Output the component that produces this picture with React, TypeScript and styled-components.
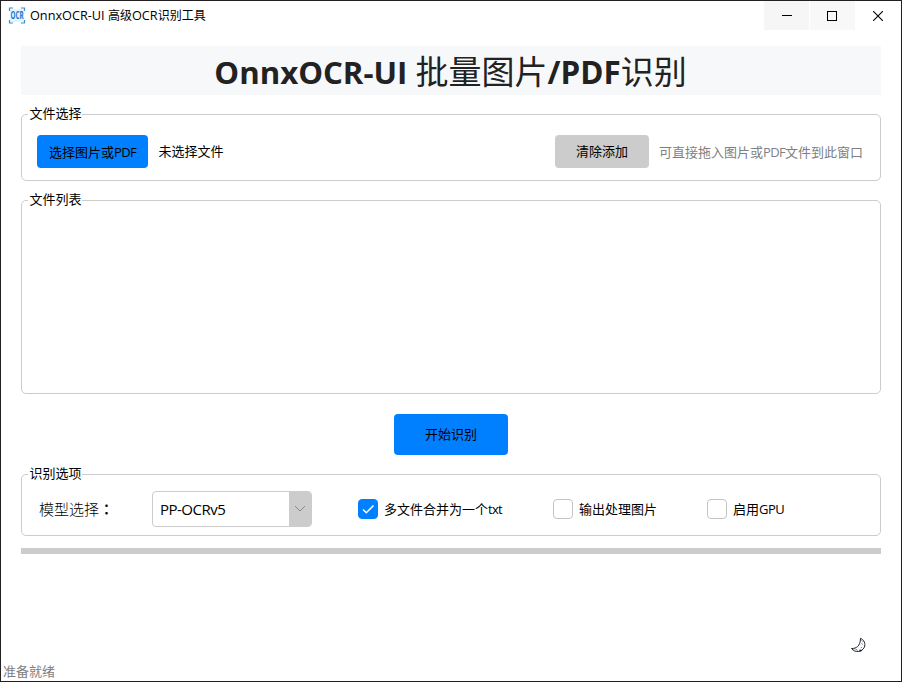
import React from "react";
import styled, { createGlobalStyle } from "styled-components";

const GlobalStyle = createGlobalStyle`
  * { box-sizing: border-box; }
  body { margin: 0; background: #fff; }
`;

const Window = styled.div`
  width: 902px;
  height: 682px;
  display: flex;
  flex-direction: column;
  border: 1px solid #242021;
  background: #fff;
  color: #000;
  font: 13px/17px "Noto Sans CJK SC", sans-serif;
  white-space: nowrap;
  overflow: hidden;
`;

const Latin = styled.span<{ $size?: number; $track?: number }>`
  font-family: "Open Sans", sans-serif;
  font-size: ${(p) => (p.$size ? `${p.$size}px` : "inherit")};
  letter-spacing: ${(p) => p.$track ?? 0}px;
`;

const TitleBar = styled.header`
  display: flex;
  height: 29px;
  flex: none;
`;

const AppTitle = styled.div`
  display: flex;
  align-items: center;
  gap: 5px;
  flex: 1;
  padding-left: 8px;
  font-size: 12px;
`;

const AppName = styled.span`
  padding-bottom: 2px;
`;

const WindowControls = styled.div`
  display: flex;
  gap: 1px;
`;

const ControlButton = styled.button<{ $bg: string }>`
  display: flex;
  align-items: center;
  justify-content: center;
  width: 45px;
  height: 29px;
  padding: 0 1px 0 0;
  border: 0;
  background: ${(p) => p.$bg};
  &:first-child { padding: 0 0 0 1px; }
`;

const Main = styled.main`
  display: flex;
  flex-direction: column;
  flex: 1;
  padding: 16px 20px 0;
`;

const Heading = styled.h1`
  margin: 0 0 11px;
  height: 49px;
  padding-right: 1px;
  background: #f7f8fa;
  color: #222;
  font-size: 33px;
  font-weight: 400;
  line-height: 48px;
  text-align: center;
  ${Latin} { font-weight: 700; }
`;

const Group = styled.fieldset<{ $height: number; $gap: number }>`
  margin: 0 0 ${(p) => p.$gap}px;
  padding: 0;
  height: ${(p) => p.$height}px;
  min-width: 0;
  border: 1px solid #ccc;
  border-radius: 5px;
`;

const GroupTitle = styled.legend`
  height: 17px;
  margin-left: 6px;
  padding: 0 0 0 1.5px;
  line-height: 14px;
`;

const FileRow = styled.div`
  display: flex;
  align-items: center;
  height: 57px;
  padding: 0 17px 0 15px;
`;

const Button = styled.button<{ $width: number; $height?: number; $muted?: boolean }>`
  width: ${(p) => p.$width}px;
  height: ${(p) => p.$height ?? 33}px;
  padding: 0 0 2px;
  border: 0;
  border-radius: 4px;
  background: ${(p) => (p.$muted ? "#ccc" : "#007fff")};
  color: #000;
  font: inherit;
`;

const PickButton = styled(Button)`
  padding: 0;
`;

const FileStatus = styled.span`
  margin-left: 10.5px;
  padding-bottom: 2px;
  flex: 1;
`;

const Hint = styled.span`
  margin-left: 10px;
  color: #808080;
`;

const StartRow = styled.div`
  display: flex;
  justify-content: center;
  margin-bottom: 11px;
`;

const OptionsRow = styled.div`
  display: flex;
  align-items: center;
  height: 52px;
  padding-left: 17px;
`;

const FieldLabel = styled.label`
  width: 113px;
  padding-bottom: 2px;
  font-size: 15px;
  font-weight: 300;
`;

const Colon = styled.span`
  font-family: "Noto Sans CJK TC", sans-serif;
  font-weight: 500;
`;

const Combo = styled.div`
  display: flex;
  width: 160px;
  height: 36px;
  margin-right: 46px;
  border: 1px solid #ccc;
  border-radius: 4px;
  overflow: hidden;
`;

const ComboValue = styled.span`
  flex: 1;
  padding-left: 7px;
  line-height: 35px;
`;

const ComboArrow = styled.span`
  display: flex;
  align-items: center;
  justify-content: center;
  width: 22px;
  background: #ccc;
`;

const Option = styled.label<{ $width: number }>`
  display: flex;
  align-items: center;
  gap: 6px;
  width: ${(p) => p.$width}px;
`;

const OptionText = styled.span`
  padding-bottom: 1px;
`;

const CheckBox = styled.span<{ $checked?: boolean }>`
  display: flex;
  width: 20px;
  height: 20px;
  border: 1px solid ${(p) => (p.$checked ? "#007fff" : "#c4c4c4")};
  border-radius: 4px;
  background: ${(p) => (p.$checked ? "#007fff" : "#fff")};
`;

const Progress = styled.div`
  height: 6px;
  background: #ccc;
`;

const ThemeRow = styled.div`
  display: flex;
  justify-content: flex-end;
  margin-top: auto;
  padding: 0 14px 8px 0;
`;

const StatusBar = styled.footer`
  height: 19px;
  padding-left: 2px;
  color: #808080;
  line-height: 17px;
`;

const AppIcon = () => (
  <svg width="16" height="18" viewBox="0 0 16 18" fill="none" overflow="visible">
    <rect x="1" y="2" width="14" height="13" fill="#e4f4ff" />
    <path d="M.5 4V1H4M12 1h3.5V4M.5 13v3H4M12 16h3.5V13" stroke="#3b8fd0" strokeWidth="1.2" />
    <text x="1.5" y="12" textLength="13" lengthAdjust="spacingAndGlyphs" fontFamily="Open Sans, sans-serif" fontSize="10" fontWeight="700" fill="#1976c8">OCR</text>
  </svg>
);

const MoonIcon = () => (
  <svg width="16" height="17" viewBox="0 0 16 17">
    <path d="M9.5 1.3c3.6 1.5 5.3 5.5 3.8 9-2.2 5-9.3 5.8-12.8 1.2 4.4.2 9-2.2 9-10.2Z" fill="#f7fbff" stroke="#252525" />
    <path d="m10.5 3.5 1 1m-1 2 1.4 1m-2 2.5 1 1M5 12l1.5 1.8M2 11.7l2.5.2" stroke="#59636e" strokeWidth=".8" />
    <path d="M8.5 13.5h2" stroke="#111" strokeWidth="1.6" />
  </svg>
);

export default function App() {
  return (
    <Window>
      <GlobalStyle />
      <TitleBar>
        <AppTitle>
          <AppIcon />
          <AppName><Latin $size={12.7}>OnnxOCR-UI </Latin>高级<Latin $size={12.7}>OCR</Latin>识别工具</AppName>
        </AppTitle>
        <WindowControls>
          <ControlButton $bg="#f6f6f6" aria-label="最小化">
            <svg width="10" height="10"><path d="M0 4.5h10" stroke="#000" /></svg>
          </ControlButton>
          <ControlButton $bg="#f8f8f8" aria-label="最大化">
            <svg width="10" height="10"><rect x=".5" y=".5" width="9" height="9" fill="none" stroke="#000" /></svg>
          </ControlButton>
          <ControlButton $bg="#fff" aria-label="关闭">
            <svg width="10" height="10"><path d="m0 0 10 10M10 0 0 10" stroke="#000" strokeWidth="1.1" /></svg>
          </ControlButton>
        </WindowControls>
      </TitleBar>
      <Main>
        <Heading><Latin $size={31.2}>OnnxOCR-UI </Latin>批量图片<Latin $size={31.4}>/PDF</Latin>识别</Heading>
        <Group $height={75} $gap={11}>
          <GroupTitle>文件选择</GroupTitle>
          <FileRow>
            <PickButton $width={111}>选择图片或<Latin $track={-0.7}>PDF</Latin></PickButton>
            <FileStatus>未选择文件</FileStatus>
            <Button $width={94} $muted>清除添加</Button>
            <Hint>可直接拖入图片或<Latin $track={-0.7}>PDF</Latin>文件到此窗口</Hint>
          </FileRow>
        </Group>
        <Group $height={202} $gap={20}>
          <GroupTitle>文件列表</GroupTitle>
        </Group>
        <StartRow><Button $width={114} $height={41}>开始识别</Button></StartRow>
        <Group $height={70} $gap={12}>
          <GroupTitle>识别选项</GroupTitle>
          <OptionsRow>
            <FieldLabel>模型选择<Colon lang="zh-Hant">：</Colon></FieldLabel>
            <Combo>
              <ComboValue><Latin $size={15} $track={-0.5}>PP-OCRv5</Latin></ComboValue>
              <ComboArrow>
                <svg width="12" height="8" fill="none"><path d="m1 1 5 5 5-5" stroke="#888" /></svg>
              </ComboArrow>
            </Combo>
            <Option $width={195}>
              <CheckBox $checked>
                <svg width="18" height="18" fill="none"><path d="m4 9.5 3.3 3.3L14.5 5.5" stroke="#fff" strokeWidth="1.5" /></svg>
              </CheckBox>
              <OptionText>多文件合并为一个<Latin $track={-0.7}>txt</Latin></OptionText>
            </Option>
            <Option $width={154}><CheckBox /><OptionText>输出处理图片</OptionText></Option>
            <Option $width={100}><CheckBox /><OptionText>启用<Latin $track={-0.5}>GPU</Latin></OptionText></Option>
          </OptionsRow>
        </Group>
        <Progress />
        <ThemeRow><MoonIcon /></ThemeRow>
      </Main>
      <StatusBar>准备就绪</StatusBar>
    </Window>
  );
}
